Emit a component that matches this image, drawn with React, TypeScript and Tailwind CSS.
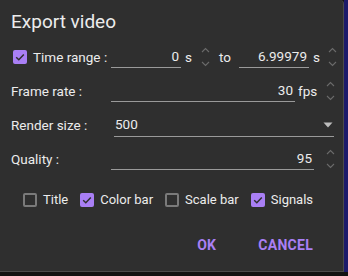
import { ReactNode } from "react";

const font = { fontFamily: "Roboto, 'Noto Sans', sans-serif" };

const Spinner = ({ className = "" }: { className?: string }) => (
  <div className={"flex w-[10px] flex-col items-center justify-between " + className}>
    <svg width="9" height="6" viewBox="0 0 9 6" fill="none">
      <path d="M1 5 L4.5 1.5 L8 5" stroke="#6b6b6b" strokeWidth="1.1" />
    </svg>
    <svg width="9" height="6" viewBox="0 0 9 6" fill="none">
      <path d="M1 1 L4.5 4.5 L8 1" stroke="#6b6b6b" strokeWidth="1.1" />
    </svg>
  </div>
);

const Checkbox = ({ checked }: { checked?: boolean }) =>
  checked ? (
    <span className="flex h-[14px] w-[14px] items-center justify-center rounded-[2px] bg-[#a97ff5]">
      <svg width="12" height="12" viewBox="0 0 12 12" fill="none">
        <path d="M2.2 6.2 L4.8 8.7 L9.8 3.4" stroke="#2f2f2f" strokeWidth="1.5" />
      </svg>
    </span>
  ) : (
    <span className="h-[14px] w-[14px] rounded-[2px] border-2 border-[#7a7a7a]" />
  );

const NumberField = ({ value, width }: { value: string; width: string }) => (
  <div
    className={
      "flex h-[22px] items-center justify-end border-b border-[#9a9a9a] pr-[2px] text-[13.5px] text-[#ececec] " +
      width
    }
  >
    {value}
  </div>
);

const Row = ({ label, children }: { label: ReactNode; children: ReactNode }) => (
  <div className="flex h-[34px] items-center">
    <div className="w-[100px] text-[13.5px] text-[#ececec]">{label}</div>
    {children}
  </div>
);

const Option = ({ label, checked, className = "" }: { label: string; checked?: boolean; className?: string }) => (
  <label className={"flex items-center gap-[6px] text-[13px] text-[#ececec] " + className}>
    <Checkbox checked={checked} />
    {label}
  </label>
);

export default function App() {
  return (
    <div className="flex h-[276px] w-[348px] flex-col bg-[#121212]" style={font}>
      <div className="flex h-[272px]">
        <div className="flex w-[344px] flex-col rounded-tr-[4px] border-r border-b border-[#4a4a4a] bg-[#2f2f2f] pl-[11px]">
          <h2 className="mb-[4px] h-[28px] mt-[8px] text-[19px] leading-[28px] font-normal text-[#ececec]">
            Export video
          </h2>

          <Row
            label={
              <span className="ml-[2px] flex items-center gap-[6px]">
                <Checkbox checked />
                Time range :
              </span>
            }
          >
            <NumberField value="0" width="w-[70px]" />
            <span className="ml-[4px] w-[8px] text-[13.5px] text-[#ececec]">s</span>
            <Spinner className="ml-[7px] h-[20px]" />
            <span className="ml-[9px] text-[13.5px] text-[#ececec]">to</span>
            <div className="ml-[8px]">
              <NumberField value="6.99979" width="w-[70px]" />
            </div>
            <span className="ml-[4px] w-[8px] text-[13.5px] text-[#ececec]">s</span>
            <Spinner className="ml-[7px] h-[20px]" />
          </Row>

          <Row label="Frame rate :">
            <NumberField value="30" width="w-[184px]" />
            <span className="ml-[3px] w-[22px] text-[13.5px] text-[#ececec]">fps</span>
            <Spinner className="ml-[5px] h-[20px]" />
          </Row>

          <Row label="Render size :">
            <div className="ml-[3px] flex h-[24px] w-[220px] items-center justify-between border-b border-[#9a9a9a] pl-[1px] text-[13.5px] text-[#ececec]">
              500
              <svg width="10" height="6" viewBox="0 0 10 6" className="mr-[1px]">
                <path d="M0.5 0.5 H9.5 L5 5.5 Z" fill="#bdbdbd" />
              </svg>
            </div>
          </Row>

          <Row label="Quality :">
            <NumberField value="95" width="w-[203px]" />
            <Spinner className="ml-[11px] h-[20px]" />
          </Row>

          <div className="mt-[12px] flex h-[24px] items-center pl-[12px]">
            <Option label="Title" />
            <Option label="Color bar" checked className="ml-[12px]" />
            <Option label="Scale bar" className="ml-[12px]" />
            <Option label="Signals" checked className="ml-[12px]" />
          </div>

          <div className="mt-[15px] flex h-[36px] items-center justify-end gap-[42px] pr-[30px] text-[14px] font-bold tracking-[0.02em] text-[#a97ff5]">
            <button>OK</button>
            <button>CANCEL</button>
          </div>
        </div>
        <div className="flex-1 bg-[#1c1a6a]" />
      </div>
    </div>
  );
}
